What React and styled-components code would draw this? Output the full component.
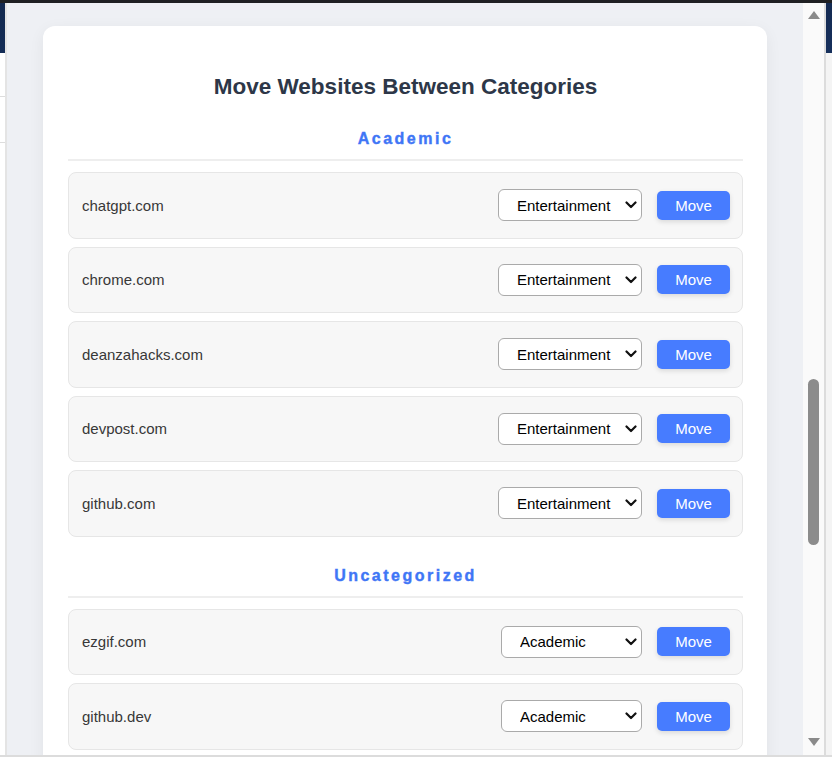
import React from 'react';
import styled, { createGlobalStyle } from 'styled-components';

const GlobalStyle = createGlobalStyle`
  html, body {
    margin: 0;
    padding: 0;
    background: #ffffff;
    font-family: "Liberation Sans", Arial, sans-serif;
  }
`;

const sections = [
  {
    name: 'Academic',
    selectWidth: 144,
    sites: ['chatgpt.com', 'chrome.com', 'deanzahacks.com', 'devpost.com', 'github.com'],
    options: ['Entertainment', 'Uncategorized'],
  },
  {
    name: 'Uncategorized',
    selectWidth: 141,
    sites: ['ezgif.com', 'github.dev', 'google.com', 'youtube.com'],
    options: ['Academic', 'Entertainment'],
  },
];

const App = () => {
  return (
    <>
      <GlobalStyle />
      <Frame>
        <TopStrip />
        <Middle>
          <PageEdge>
            <EdgeLine />
            <EdgeLine />
          </PageEdge>
          <Popup>
            <Viewport>
              <Card>
                <Title>Move Websites Between Categories</Title>
                {sections.map((section) => (
                  <Section key={section.name}>
                    <SectionHeading>{section.name}</SectionHeading>
                    <SiteList>
                      {section.sites.map((site) => (
                        <SiteRow key={site}>
                          <SiteName>{site}</SiteName>
                          <Controls>
                            <SelectWrap $width={section.selectWidth}>
                              <CategorySelect defaultValue={section.options[0]}>
                                {section.options.map((opt) => (
                                  <option key={opt}>{opt}</option>
                                ))}
                              </CategorySelect>
                              <Chevron viewBox="0 0 12 8">
                                <path d="M1.5 1.5 L6 6 L10.5 1.5" fill="none" stroke="#111" strokeWidth="2.2" strokeLinecap="round" strokeLinejoin="round" />
                              </Chevron>
                            </SelectWrap>
                            <MoveButton>Move</MoveButton>
                          </Controls>
                        </SiteRow>
                      ))}
                    </SiteList>
                  </Section>
                ))}
              </Card>
            </Viewport>
            <Scrollbar>
              <Arrow viewBox="0 0 14 10">
                <path d="M1 9 L7 1 L13 9 Z" fill="#8a8a8a" />
              </Arrow>
              <Track>
                <Thumb />
              </Track>
              <Arrow viewBox="0 0 14 10">
                <path d="M1 1 L7 9 L13 1 Z" fill="#8a8a8a" />
              </Arrow>
            </Scrollbar>
          </Popup>
          <RightEdge />
        </Middle>
        <BottomStrip />
      </Frame>
    </>
  );
};

const Frame = styled.div`
  width: 832px;
  height: 757px;
  display: flex;
  flex-direction: column;
  overflow: hidden;
`;

const TopStrip = styled.div`
  height: 3px;
  background: #1f2023;
  flex-shrink: 0;
`;

const BottomStrip = styled.div`
  height: 2px;
  background: #dcdcdc;
  flex-shrink: 0;
`;

const Middle = styled.div`
  flex: 1;
  display: flex;
  min-height: 0;
`;

const PageEdge = styled.div`
  width: 7px;
  flex-shrink: 0;
  background: linear-gradient(#13294f 0, #142d57 50px, #ffffff 50px);
  display: flex;
  flex-direction: column;
  gap: 45px;
  padding-top: 93px;
  box-sizing: border-box;
  border-right: 2px solid #e4e4e4;
`;

const EdgeLine = styled.div`
  height: 1px;
  background: #dddddd;
`;

const RightEdge = styled.div`
  width: 6px;
  flex-shrink: 0;
  background: linear-gradient(#142a52 0, #16305c 50px, #f4f4f4 50px);
`;

const Popup = styled.div`
  flex: 1;
  display: flex;
  min-width: 0;
  background: #eef0f4;
  border-right: 2px solid #dcdcdc;
`;

const Viewport = styled.div`
  flex: 1;
  overflow: hidden;
  padding: 23px 36px 0 36px;
`;

const Card = styled.div`
  background: #ffffff;
  border-radius: 12px;
  box-shadow: 0 4px 16px rgba(0, 0, 0, 0.06);
  padding: 25px 24px 25px 25px;
`;

const Title = styled.h2`
  margin: 23px 0 29px;
  text-align: center;
  font-size: 22.5px;
  line-height: 26px;
  font-weight: bold;
  color: #2d3748;
`;

const Section = styled.section`
  margin-bottom: 29px;
`;

const SectionHeading = styled.h3`
  margin: 0 0 11px;
  padding-bottom: 11px;
  border-bottom: 2px solid #eeeeee;
  text-align: center;
  font-size: 16px;
  line-height: 19px;
  font-weight: bold;
  letter-spacing: 2.5px;
  color: #3f76f6;
  -webkit-text-stroke: 0.4px #3f76f6;
`;

const SiteList = styled.div`
  display: flex;
  flex-direction: column;
  gap: 8px;
`;

const SiteRow = styled.div`
  height: 66.5px;
  box-sizing: border-box;
  display: flex;
  align-items: center;
  justify-content: space-between;
  padding: 0 12px 0 13px;
  background: #f7f7f7;
  border: 1px solid #e6e6e6;
  border-radius: 8px;
`;

const SiteName = styled.span`
  font-size: 15px;
  color: #383838;
`;

const Controls = styled.div`
  display: flex;
  align-items: center;
  gap: 15px;
`;

const SelectWrap = styled.div`
  position: relative;
  width: ${(p) => p.$width}px;
  height: 32px;
`;

const CategorySelect = styled.select`
  appearance: none;
  width: 100%;
  height: 100%;
  box-sizing: border-box;
  padding: 0 26px 0 18px;
  font-family: "Liberation Sans", Arial, sans-serif;
  font-size: 15px;
  color: #000000;
  background: #ffffff;
  border: 1px solid #aaaaaa;
  border-radius: 6px;
`;

const Chevron = styled.svg`
  position: absolute;
  right: 5px;
  top: 12px;
  width: 12px;
  height: 8px;
  pointer-events: none;
`;

const MoveButton = styled.button`
  width: 73px;
  height: 29px;
  border: none;
  border-radius: 5px;
  background: #477cff;
  color: #ffffff;
  font-family: "Liberation Sans", Arial, sans-serif;
  font-size: 15px;
  box-shadow: 0 2px 5px rgba(0, 0, 0, 0.12);
  cursor: pointer;
`;

const Scrollbar = styled.div`
  width: 21px;
  flex-shrink: 0;
  background: #fafafa;
  display: flex;
  flex-direction: column;
  align-items: center;
  padding: 7px 0 8px;
  box-sizing: border-box;
`;

const Arrow = styled.svg`
  width: 14px;
  height: 10px;
  flex-shrink: 0;
`;

const Track = styled.div`
  flex: 1;
  width: 100%;
  display: flex;
  justify-content: center;
`;

const Thumb = styled.div`
  width: 11px;
  height: 166px;
  margin-top: 359px;
  border-radius: 6px;
  background: #8c8c8c;
`;

export default App;
